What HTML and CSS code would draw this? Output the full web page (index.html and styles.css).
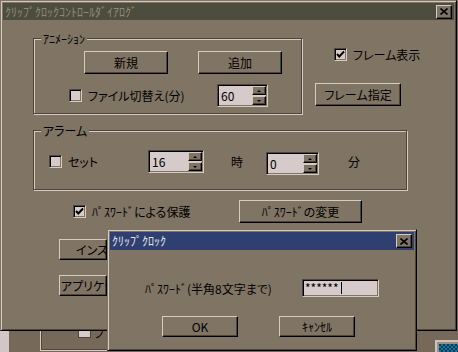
FILE: index.html
```html
<!DOCTYPE html>
<html lang="ja">
<head>
  <meta charset="UTF-8">
  <title>ｸﾘｯﾌﾟｸﾛｯｸｺﾝﾄﾛｰﾙﾀﾞｲｱﾛｸﾞ</title>
  <link rel="stylesheet" href="styles.css">
</head>
<body>
  <div class="desk">
    <div class="back-strip"></div>
    <div class="back-frame">
      <span class="back-check"></span><span class="back-text">フ</span>
    </div>
    <div class="tray-icon"><span></span></div>

    <div class="win main-win">
      <div class="titlebar inactive">
        <span class="title-text">ｸﾘｯﾌﾟｸﾛｯｸｺﾝﾄﾛｰﾙﾀﾞｲｱﾛｸﾞ</span>
        <button class="close-btn" type="button"><svg width="8" height="7" viewBox="0 0 8 7"><path d="M0.5 0.5 L7.5 6.5 M7.5 0.5 L0.5 6.5" stroke="#000" stroke-width="1.6" fill="none"/></svg></button>
      </div>
      <div class="main-body">
        <div class="top-row">
          <div class="group anim-group">
            <span class="legend">ｱﾆﾒｰｼｮﾝ</span>
            <div class="anim-buttons">
              <button class="btn anim-btn" type="button">新規</button>
              <button class="btn anim-btn" type="button">追加</button>
            </div>
            <div class="file-row">
              <label class="check file-check"><span class="box"></span>ファイル切替え(分)</label>
              <div class="spin spin-60">
                <span class="spin-value">60</span>
                <span class="spin-arrows"><span class="arrow up"></span><span class="arrow down"></span></span>
              </div>
            </div>
          </div>
          <div class="frame-col">
            <label class="check frame-check"><span class="box checked"><svg width="9" height="9" viewBox="0 0 9 9"><path d="M1 4 L3.3 6.5 L8 1.5" stroke="#000" stroke-width="2" fill="none"/></svg></span>フレーム表示</label>
            <button class="btn frame-btn" type="button">フレーム指定</button>
          </div>
        </div>

        <div class="group alarm-group">
          <span class="legend">アラーム</span>
          <div class="alarm-row">
            <label class="check set-check"><span class="box"></span>セット</label>
            <div class="spin spin-hour">
              <span class="spin-value">16</span>
              <span class="spin-arrows"><span class="arrow up"></span><span class="arrow down"></span></span>
            </div>
            <span class="unit hour-unit">時</span>
            <div class="spin spin-min">
              <span class="spin-value">0</span>
              <span class="spin-arrows"><span class="arrow up"></span><span class="arrow down"></span></span>
            </div>
            <span class="unit min-unit">分</span>
          </div>
        </div>

        <div class="pw-row">
          <label class="check pw-check"><span class="box checked"><svg width="9" height="9" viewBox="0 0 9 9"><path d="M1 4 L3.3 6.5 L8 1.5" stroke="#000" stroke-width="2" fill="none"/></svg></span>ﾊﾟｽﾜｰﾄﾞによる保護</label>
          <button class="btn pw-btn" type="button">ﾊﾟｽﾜｰﾄﾞの変更</button>
        </div>

        <button class="btn wide-btn install-btn" type="button">インス</button>
        <button class="btn wide-btn app-btn" type="button">アプリケー</button>
      </div>
    </div>

    <div class="win pw-dialog">
      <div class="titlebar active">
        <span class="title-text">ｸﾘｯﾌﾟｸﾛｯｸ</span>
        <button class="close-btn" type="button"><svg width="8" height="7" viewBox="0 0 8 7"><path d="M0.5 0.5 L7.5 6.5 M7.5 0.5 L0.5 6.5" stroke="#000" stroke-width="1.6" fill="none"/></svg></button>
      </div>
      <div class="dlg-body">
        <div class="dlg-row">
          <span class="dlg-label">ﾊﾟｽﾜｰﾄﾞ(半角8文字まで)</span>
          <div class="field pw-field">******<span class="caret"></span></div>
        </div>
        <div class="dlg-buttons">
          <button class="btn dlg-btn" type="button">OK</button>
          <button class="btn dlg-btn" type="button">ｷｬﾝｾﾙ</button>
        </div>
      </div>
    </div>
  </div>
</body>
</html>
```

FILE: styles.css
```css
:root {
  --face: #807464;
  --light: #d6cac2;
  --dark: #4e453a;
  --field: #d6caca;
  --desk: #76695a;
}
body {
  margin: 0;
  font-family: "Noto Sans CJK JP", "DejaVu Sans", sans-serif;
  font-size: 12px;
  font-feature-settings: "palt";
  color: #000;
}
.desk {
  position: relative;
  width: 458px;
  height: 352px;
  overflow: hidden;
  background: var(--desk);
}

/* things behind the windows */
.back-strip {
  position: absolute;
  left: 0;
  top: 300px;
  width: 9px;
  height: 52px;
  background: #d2c6c6;
}
.back-frame {
  position: absolute;
  left: 40px;
  top: 300px;
  width: 66px;
  height: 50px;
  border-left: 1px solid var(--light);
  border-bottom: 1px solid var(--light);
  box-shadow: inset 1px 0 var(--dark), inset 0 -1px var(--dark);
}
.back-check {
  position: absolute;
  left: 37px;
  top: 31px;
  width: 11px;
  height: 6px;
  background: var(--field);
  border: 1px solid var(--dark);
  border-top: none;
}
.back-text {
  position: absolute;
  left: 53px;
  top: 26px;
  line-height: 14px;
}
.tray-icon {
  position: absolute;
  left: 435px;
  top: 340px;
  width: 23px;
  height: 12px;
  box-sizing: border-box;
  border: 2px solid #cfc3bb;
  border-right: none;
  border-bottom: none;
  background: #9c9084;
  padding: 2px 0 0 2px;
}
.tray-icon span {
  display: block;
  height: 100%;
  background: repeating-conic-gradient(#0a7f86 0 25%, #14306e 0 50%) 0 0 / 4px 4px;
}

/* windows */
.win {
  position: absolute;
  box-sizing: border-box;
  background: var(--face);
  border: 1px solid;
  border-color: var(--face) #000 #000 var(--face);
  box-shadow: inset 1px 1px var(--light), inset -1px -1px var(--dark);
  padding: 2px;
}
.main-win {
  left: 0;
  top: 0;
  width: 457px;
  height: 331px;
}
.pw-dialog {
  left: 107px;
  top: 229px;
  width: 310px;
  height: 122px;
}
.titlebar {
  display: flex;
  align-items: center;
  justify-content: space-between;
  padding: 0 2px 0 2px;
}
.titlebar.inactive {
  height: 17px;
  background: #4d4d3f;
  color: #918a78;
}
.titlebar.active {
  height: 18px;
  background: #2f3f6f;
  color: #e6e6ea;
}
.title-text {
  line-height: 14px;
  white-space: nowrap;
}
.close-btn {
  box-sizing: border-box;
  width: 16px;
  height: 14px;
  padding: 0;
  background: var(--face);
  border: 1px solid;
  border-color: var(--light) #000 #000 var(--light);
  box-shadow: inset -1px -1px var(--dark);
  display: flex;
  align-items: center;
  justify-content: center;
}
.close-btn svg {
  display: block;
}

/* shared controls */
.btn {
  box-sizing: border-box;
  padding: 0;
  background: var(--face);
  border: 1px solid;
  border-color: var(--light) #000 #000 var(--light);
  box-shadow: inset -1px -1px var(--dark);
  font: inherit;
  color: #000;
  display: flex;
  align-items: center;
  justify-content: center;
  white-space: nowrap;
  overflow: hidden;
}
.check {
  display: flex;
  align-items: center;
  white-space: nowrap;
}
.box {
  box-sizing: border-box;
  width: 13px;
  height: 13px;
  flex: none;
  margin-right: 6px;
  background: var(--field);
  border: 1px solid;
  border-color: var(--dark) var(--light) var(--light) var(--dark);
  box-shadow: inset 1px 1px #000, inset -1px -1px var(--face);
  display: flex;
  align-items: center;
  justify-content: center;
}
.box svg {
  display: block;
}
.spin,
.field {
  box-sizing: border-box;
  height: 23px;
  background: var(--field);
  border: 1px solid;
  border-color: var(--dark) var(--light) var(--light) var(--dark);
  box-shadow: inset 1px 1px #000, inset -1px -1px var(--face);
  display: flex;
  align-items: center;
  padding: 1px;
}
.spin-value {
  flex: 1;
  padding-left: 2px;
  line-height: 14px;
}
.spin-arrows {
  width: 14px;
  align-self: stretch;
  display: flex;
  flex-direction: column;
  gap: 1px;
}
.arrow {
  flex: 1;
  box-sizing: border-box;
  background: var(--face);
  border: 1px solid;
  border-color: var(--light) #000 #000 var(--light);
  box-shadow: inset -1px -1px var(--dark);
  display: flex;
  align-items: center;
  justify-content: center;
}
.arrow::after {
  content: "";
  border-left: 2px solid transparent;
  border-right: 2px solid transparent;
}
.arrow.up::after {
  border-bottom: 2px solid #000;
}
.arrow.down::after {
  border-top: 2px solid #000;
}

/* group boxes */
.group {
  position: relative;
  box-sizing: border-box;
  border: 1px solid var(--dark);
  box-shadow: inset 1px 1px var(--light), 1px 1px var(--light);
}
.legend {
  position: absolute;
  top: -8px;
  left: 7px;
  padding: 0 2px;
  line-height: 15px;
  background: var(--face);
}

/* main dialog body */
.main-body {
  padding: 18px 0 0 30px;
}
.top-row {
  display: flex;
  align-items: flex-start;
}
.anim-group {
  width: 269px;
  height: 76px;
  padding-top: 12px;
}
.anim-buttons {
  display: flex;
  gap: 30px;
  margin-left: 50px;
}
.anim-btn {
  width: 84px;
  height: 23px;
}
.file-row {
  display: flex;
  align-items: center;
  margin-top: 10px;
  margin-left: 35px;
}
.file-check {
  width: 148px;
}
.spin-60 {
  width: 51px;
}
.frame-col {
  margin-left: 13px;
  padding-top: 10px;
  display: flex;
  flex-direction: column;
  align-items: flex-start;
}
.frame-check {
  margin-left: 19px;
  height: 13px;
}
.frame-btn {
  width: 86px;
  height: 23px;
  margin-top: 22px;
}

.alarm-group {
  width: 374px;
  height: 60px;
  margin-top: 16px;
  padding-top: 17px;
}
.alarm-row {
  display: flex;
  align-items: center;
}
.set-check {
  margin-left: 15px;
  width: 99px;
}
.spin-hour {
  width: 56px;
}
.hour-unit {
  margin-left: 27px;
}
.spin-min {
  width: 53px;
  margin-left: 23px;
  margin-top: 4px;
}
.min-unit {
  margin-left: 29px;
}

.pw-row {
  display: flex;
  align-items: center;
  margin-top: 10px;
}
.pw-check {
  margin-left: 40px;
  width: 166px;
}
.pw-btn {
  width: 123px;
  height: 23px;
}
.wide-btn {
  width: 48px;
  height: 21px;
  margin-left: 26px;
  justify-content: flex-start;
}
.install-btn {
  margin-top: 16px;
  padding-left: 16px;
}
.app-btn {
  margin-top: 15px;
  padding-left: 1px;
}

/* password dialog */
.dlg-row {
  display: flex;
  align-items: center;
  margin-top: 29px;
  margin-left: 35px;
}
.dlg-label {
  margin-right: 30px;
  white-space: nowrap;
}
.pw-field {
  width: 77px;
  height: 18px;
  padding-left: 2px;
  line-height: 14px;
}
.caret {
  width: 1px;
  height: 12px;
  margin-left: 2px;
  background: #000;
}
.dlg-buttons {
  display: flex;
  gap: 41px;
  margin-top: 19px;
  margin-left: 52px;
}
.dlg-btn {
  width: 76px;
  height: 21px;
}
```
